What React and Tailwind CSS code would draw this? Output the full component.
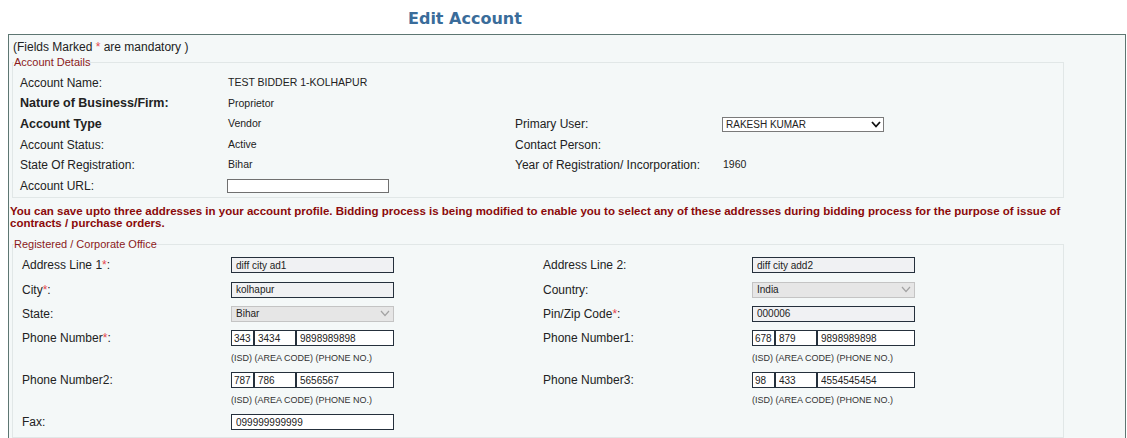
import React from 'react';

const Star = () => <span className="text-[#e5474e]">*</span>;

const Chevron = ({ dark }) => (
  <svg width="10" height="7" viewBox="0 0 10 7" className="flex-none">
    <polyline
      points="1,1 5,5.5 9,1"
      fill="none"
      stroke={dark ? '#111' : '#a3a3a3'}
      strokeWidth={dark ? 1.8 : 1.2}
    />
  </svg>
);

const TextBox = ({ value, className = '' }) => (
  <input
    readOnly
    defaultValue={value}
    className={`h-[16px] w-[163px] border border-[#25303c] bg-[#f0f1f3] px-[4px] text-[10px] text-[#222] outline-none ${className}`}
  />
);

const DisabledSelect = ({ value }) => (
  <div className="flex h-[16px] w-[163px] items-center justify-between border border-[#c4c4c4] bg-[#e6e6e6] pl-[4px] pr-[3px] text-[10px] text-[#222]">
    <span>{value}</span>
    <Chevron />
  </div>
);

const PhoneBox = ({ parts }) => (
  <div className="flex h-[16px]">
    {parts.map((p, i) => (
      <input
        key={i}
        readOnly
        defaultValue={p}
        className={`h-[16px] border border-[#25303c] bg-white text-[10px] text-[#222] outline-none ${
          i === 0 ? 'w-[23px] px-[2px]' : i === 1 ? 'w-[42px] px-[3px]' : 'w-[98px] px-[3px]'
        }`}
      />
    ))}
  </div>
);

const Hint = () => (
  <span className="text-[9px] text-[#333]">(ISD) (AREA CODE) (PHONE NO.)</span>
);

const accountRows = [
  ['Account Name:', 'TEST BIDDER 1-KOLHAPUR', null, null],
  [<b key="n" className="text-[12.5px]">Nature of Business/Firm:</b>, 'Proprietor', null, null],
  [<b key="t" className="text-[12.5px]">Account Type</b>, 'Vendor', 'Primary User:', 'select'],
  ['Account Status:', 'Active', 'Contact Person:', ''],
  ['State Of Registration:', 'Bihar', 'Year of Registration/ Incorporation:', '1960'],
  ['Account URL:', 'url', null, null],
];

export default function App() {
  return (
    <div className="min-h-screen bg-white font-['Liberation_Sans',Arial,sans-serif] text-[12px] text-[#222]">
      <div className="flex h-[34px] items-center pt-[4px] pl-[408px]">
        <h1 className="font-['DejaVu_Sans',Verdana,sans-serif] text-[16px] font-bold text-[#3a6c9a]">
          Edit Account
        </h1>
      </div>

      <div className="ml-[8px] w-[1118px] border border-b-0 border-[#5d7672] bg-[#f4f8f8] pb-[40px]">
        <p className="mt-[3px] h-[18px] pl-[4px] leading-[18px]">
          (Fields Marked <Star /> are mandatory )
        </p>

        <fieldset className="ml-[3px] w-[1052px] border border-[#e1e7e7] pb-[1px] pl-[1px]">
          <legend className="text-[11px] leading-[13px] text-[#8b1a1a]">Account Details</legend>
          <div className="grid auto-rows-[20.5px] grid-cols-[208px_287px_208px_1fr] items-center pt-[4px] pl-[6px]">
            {accountRows.map(([l1, v1, l2, v2], i) => (
              <React.Fragment key={i}>
                <span>{l1}</span>
                {v1 === 'url' ? (
                  <input
                    readOnly
                    className="-ml-px h-[14px] w-[162px] border border-[#707070] bg-white outline-none"
                  />
                ) : (
                  <span className="text-[10.5px]">{v1}</span>
                )}
                <span>{l2}</span>
                {v2 === 'select' ? (
                  <div className="-ml-px flex h-[15px] w-[162px] items-center justify-between border border-[#7a7a7a] bg-white pl-[3px] pr-[2px] text-[10px]">
                    <span>RAKESH KUMAR</span>
                    <Chevron dark />
                  </div>
                ) : (
                  <span className="text-[10.5px]">{v2}</span>
                )}
              </React.Fragment>
            ))}
          </div>
        </fieldset>

        <p className="mt-[7px] pl-[1px] text-[11.5px] font-bold leading-[12px] text-[#8b0a0a]">
          You can save upto three addresses in your account profile. Bidding process is being modified to enable you to select any of these addresses during bidding process for the purpose of issue of
          <br />
          contracts / purchase orders.
        </p>

        <fieldset className="mt-[9px] ml-[3px] w-[1052px] border border-[#e1e7e7] pl-[1px]">
          <legend className="text-[11px] leading-[13px] text-[#8b1a1a]">Registered / Corporate Office</legend>
          <div className="grid grid-cols-[209px_312px_209px_1fr] grid-rows-[24.5px_24px_24px_25px_16px_27px_14px_29px] items-center pt-[2px] pl-[8px]">
            <span>
              Address Line 1<Star />:
            </span>
            <TextBox value="diff city ad1" />
            <span>Address Line 2:</span>
            <TextBox value="diff city add2" />

            <span>
              City<Star />:
            </span>
            <TextBox value="kolhapur" />
            <span>Country:</span>
            <DisabledSelect value="India" />

            <span>State:</span>
            <DisabledSelect value="Bihar" />
            <span>
              Pin/Zip Code<Star />:
            </span>
            <TextBox value="000006" />

            <span>
              Phone Number<Star />:
            </span>
            <PhoneBox parts={['343', '3434', '9898989898']} />
            <span>Phone Number1:</span>
            <PhoneBox parts={['678', '879', '9898989898']} />

            <span />
            <Hint />
            <span />
            <Hint />

            <span>Phone Number2:</span>
            <PhoneBox parts={['787', '786', '5656567']} />
            <span>Phone Number3:</span>
            <PhoneBox parts={['98', '433', '4554545454']} />

            <span />
            <Hint />
            <span />
            <Hint />

            <span>Fax:</span>
            <TextBox value="099999999999" className="bg-white" />
            <span />
            <span />
          </div>
        </fieldset>
      </div>
    </div>
  );
}
